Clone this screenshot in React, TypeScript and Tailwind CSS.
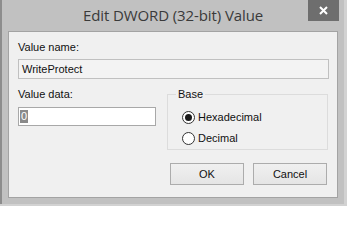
import React from "react";

function Radio({ checked, label }: { checked?: boolean; label: string }) {
    return (
        <label className="flex items-center gap-[3px] h-[13px]">
            <span className="w-[13px] h-[13px] rounded-full border border-[#333333] bg-white flex items-center justify-center">
                {checked && <span className="w-[7px] h-[7px] rounded-full bg-[#1a1a1a]" />}
            </span>
            <span>{label}</span>
        </label>
    );
}

function DialogButton({ children }: { children: React.ReactNode }) {
    return (
        <button className="w-[74px] h-[22px] border border-[#acacac] bg-gradient-to-b from-[#f0f0f0] to-[#e5e5e5] text-[#111]">
            {children}
        </button>
    );
}

export default function App() {
    return (
        <div className="w-[347px] h-[206px] bg-[#d2d2d2]" style={{ fontFamily: '"Liberation Sans", Arial, sans-serif' }}>
            <div className="relative w-[344px] h-[204px] bg-[#c1c1c1] border-l-2 border-[#8d8d8d] flex flex-col">
                {/* title bar */}
                <div className="h-[31px] flex items-center justify-center pb-[1px]">
                    <span className="text-[15px] text-[#3a3a3a] tracking-[-0.1px]" style={{ fontFamily: '"Open Sans", "Noto Sans", sans-serif' }}>
                        Edit DWORD (32-bit) Value
                    </span>
                </div>
                <button className="absolute top-0 right-[5px] w-[31px] h-[21px] bg-[#6e6e6e] flex items-center justify-center">
                    <svg width="9" height="9" viewBox="0 0 9 9">
                        <path d="M1 1 L8 8 M8 1 L1 8" stroke="#ffffff" strokeWidth="2" />
                    </svg>
                </button>

                {/* content panel */}
                <div className="ml-[6px] w-[330px] h-[167px] border border-[#a3a3a3] bg-[#f0f0f0] text-[11px] text-[#111] px-[9px] pt-[9px] flex flex-col">
                    <span className="leading-[13px]">Value name:</span>
                    <div className="mt-[5px] w-[311px] h-[20px] border border-[#c0c0c0] bg-[#f3f3f3] px-[3px] flex items-center">
                        WriteProtect
                    </div>

                    <div className="mt-[9px] flex gap-[11px]">
                        <div className="flex flex-col">
                            <span className="leading-[13px]">Value data:</span>
                            <div className="mt-[6px] w-[138px] h-[19px] border border-[#a8a8a8] bg-white px-[1px] flex items-center">
                                <span className="bg-[#8a8a8a] text-white leading-[13px] px-[1px]">0</span>
                            </div>
                        </div>
                        <fieldset className="w-[162px] h-[62px] border border-[#dcdcdc] px-[14px]">
                            <legend className="ml-[-6px] px-[2px] leading-[13px]">Base</legend>
                            <div className="mt-[10px] flex flex-col gap-[8px]">
                                <Radio checked label="Hexadecimal" />
                                <Radio label="Decimal" />
                            </div>
                        </fieldset>
                    </div>

                    <div className="mt-[13px] flex justify-end gap-[9px] pr-[1px]">
                        <DialogButton>OK</DialogButton>
                        <DialogButton>Cancel</DialogButton>
                    </div>
                </div>
            </div>
        </div>
    );
}
